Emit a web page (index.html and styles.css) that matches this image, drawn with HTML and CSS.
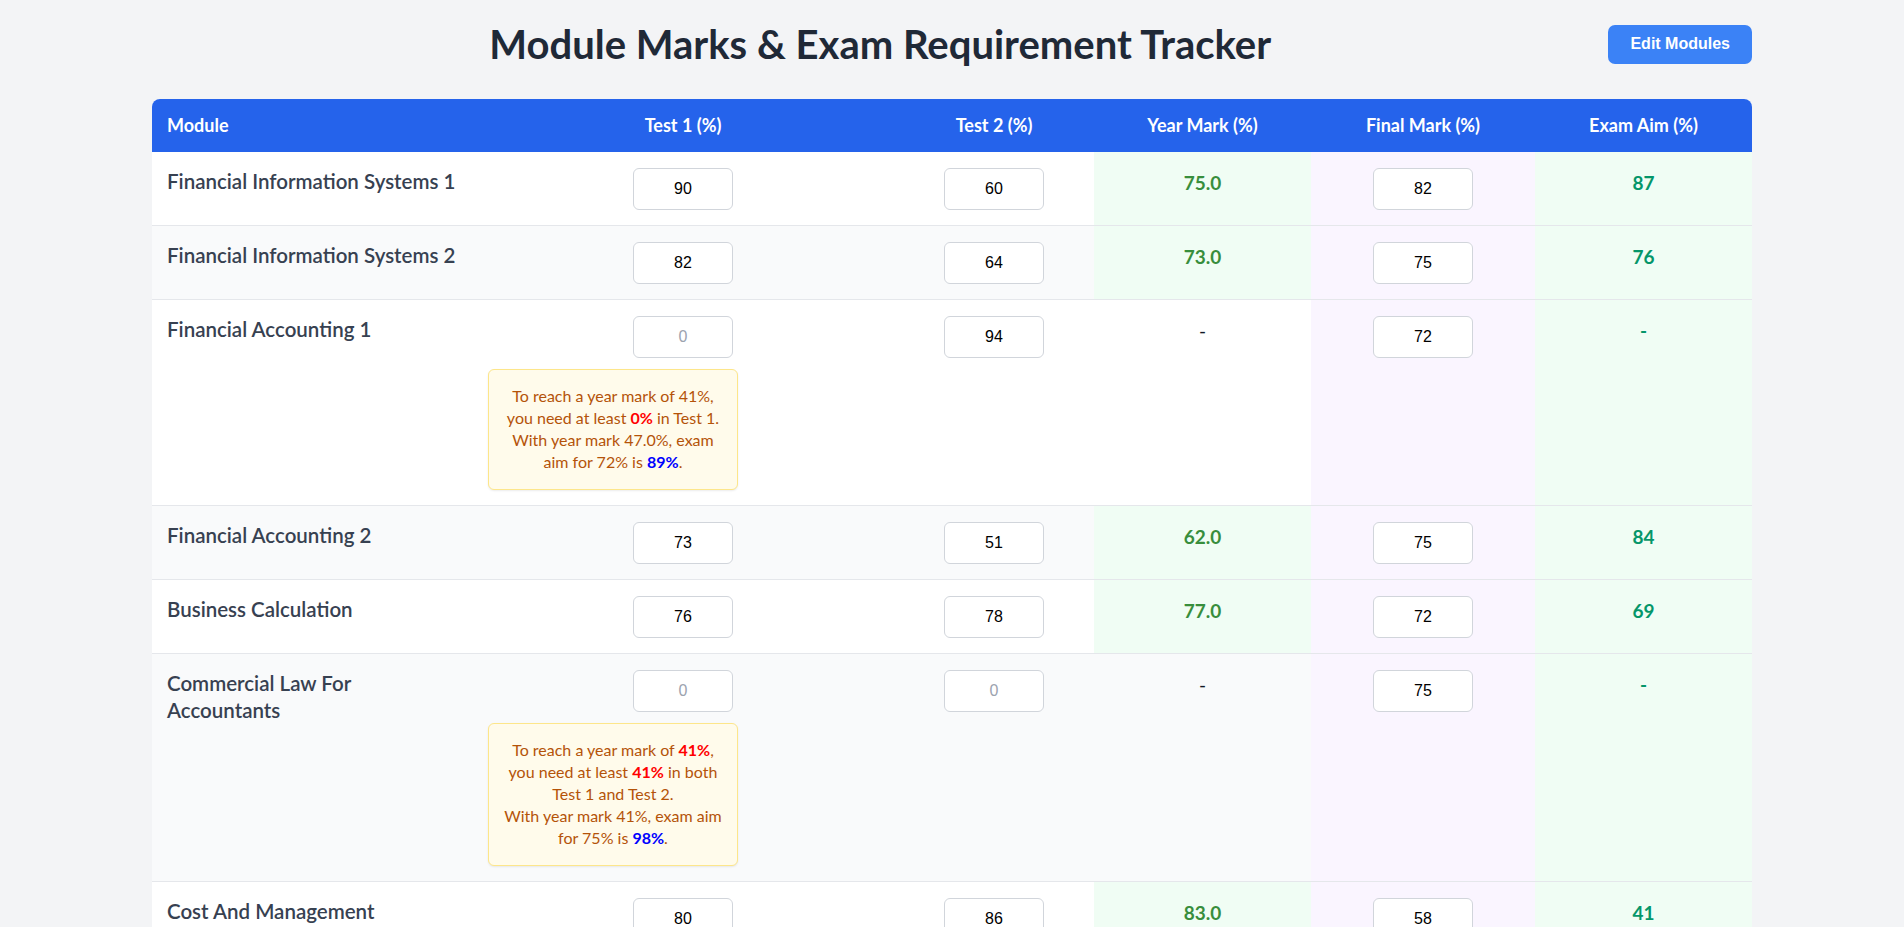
FILE: index.html
```html
<!DOCTYPE html>
<html>
<head>
	<title>Module Marks &amp; Exam Requirement Tracker</title>
	<meta name="viewport" content="width=device-width, initial-scale=1.0" />
	<link rel="stylesheet" href="styles.css">
</head>
<body>
	<div class="page">
		<header class="top">
			<h1 class="title">Module Marks &amp; Exam Requirement Tracker</h1>
			<button class="edit-btn">Edit Modules</button>
		</header>

		<div class="table-wrap">
			<table class="marks">
				<colgroup>
					<col class="w-module">
					<col class="w-test1">
					<col class="w-test2">
					<col class="w-year">
					<col class="w-final">
					<col class="w-aim">
				</colgroup>
				<thead>
					<tr>
						<th class="th-module">Module</th>
						<th>Test 1 (%)</th>
						<th>Test 2 (%)</th>
						<th>Year Mark (%)</th>
						<th>Final Mark (%)</th>
						<th>Exam Aim (%)</th>
					</tr>
				</thead>
				<tbody>
					<tr>
						<td class="module">Financial Information Systems 1</td>
						<td class="mark"><input class="mark-input" type="text" value="90" placeholder="0"></td>
						<td class="mark"><input class="mark-input" type="text" value="60" placeholder="0"></td>
						<td class="year filled">75.0</td>
						<td class="final"><input class="mark-input" type="text" value="82"></td>
						<td class="aim">87</td>
					</tr>
					<tr>
						<td class="module">Financial Information Systems 2</td>
						<td class="mark"><input class="mark-input" type="text" value="82" placeholder="0"></td>
						<td class="mark"><input class="mark-input" type="text" value="64" placeholder="0"></td>
						<td class="year filled">73.0</td>
						<td class="final"><input class="mark-input" type="text" value="75"></td>
						<td class="aim">76</td>
					</tr>
					<tr>
						<td class="module">Financial Accounting 1</td>
						<td class="mark">
							<input class="mark-input" type="text" value="" placeholder="0">
							<div class="hint">
								To reach a year mark of 41%, you need at least <b class="need">0%</b> in Test 1.<br>
								With year mark 47.0%, exam aim for 72% is <b class="goal">89%</b>.
							</div>
						</td>
						<td class="mark"><input class="mark-input" type="text" value="94" placeholder="0"></td>
						<td class="year">-</td>
						<td class="final"><input class="mark-input" type="text" value="72"></td>
						<td class="aim">-</td>
					</tr>
					<tr>
						<td class="module">Financial Accounting 2</td>
						<td class="mark"><input class="mark-input" type="text" value="73" placeholder="0"></td>
						<td class="mark"><input class="mark-input" type="text" value="51" placeholder="0"></td>
						<td class="year filled">62.0</td>
						<td class="final"><input class="mark-input" type="text" value="75"></td>
						<td class="aim">84</td>
					</tr>
					<tr>
						<td class="module">Business Calculation</td>
						<td class="mark"><input class="mark-input" type="text" value="76" placeholder="0"></td>
						<td class="mark"><input class="mark-input" type="text" value="78" placeholder="0"></td>
						<td class="year filled">77.0</td>
						<td class="final"><input class="mark-input" type="text" value="72"></td>
						<td class="aim">69</td>
					</tr>
					<tr>
						<td class="module">Commercial Law For Accountants</td>
						<td class="mark">
							<input class="mark-input" type="text" value="" placeholder="0">
							<div class="hint">
								To reach a year mark of <b class="need">41%</b>, you need at least <b class="need">41%</b> in both Test 1 and Test 2.<br>
								With year mark 41%, exam aim for 75% is <b class="goal">98%</b>.
							</div>
						</td>
						<td class="mark"><input class="mark-input" type="text" value="" placeholder="0"></td>
						<td class="year">-</td>
						<td class="final"><input class="mark-input" type="text" value="75"></td>
						<td class="aim">-</td>
					</tr>
					<tr>
						<td class="module">Cost And Management Accounting</td>
						<td class="mark"><input class="mark-input" type="text" value="80" placeholder="0"></td>
						<td class="mark"><input class="mark-input" type="text" value="86" placeholder="0"></td>
						<td class="year filled">83.0</td>
						<td class="final"><input class="mark-input" type="text" value="58"></td>
						<td class="aim">41</td>
					</tr>
				</tbody>
			</table>
		</div>
	</div>
</body>
</html>
```

FILE: styles.css
```css
html, body {
	margin: 0;
	background: #f3f4f6;
	font-family: "Lato", "Noto Sans", sans-serif;
	color: #1f2937;
}
.page {
	max-width: 1600px;
	margin: 0 auto;
	padding: 20px 0 40px 0;
}
.top {
	display: flex;
	align-items: center;
	margin-bottom: 31px;
}
.title {
	flex: 1;
	margin: 0;
	text-align: center;
	font-size: 40px;
	line-height: 48px;
	font-weight: 700;
	color: #1f2937;
}
.edit-btn {
	background-color: #3b82f6;
	color: white;
	border: none;
	border-radius: 7px;
	font-family: "Liberation Sans", Arial, sans-serif;
	font-weight: bold;
	font-size: 16px;
	padding: 10px 22px;
	height: 39px;
}
.table-wrap {
	background: white;
	border-radius: 8px 8px 0 0;
	overflow: hidden;
}
.marks {
	width: 100%;
	border-collapse: collapse;
	table-layout: fixed;
}
.w-module { width: 320px; }
.w-test1 { width: 422px; }
.w-test2 { width: 200px; }
.w-year { width: 217px; }
.w-final { width: 224px; }
.w-aim { width: 217px; }
.marks th {
	background: #2563eb;
	color: white;
	font-size: 18px;
	font-weight: 700;
	line-height: 21px;
	padding: 16px;
	text-align: center;
}
.marks th.th-module {
	text-align: left;
	padding-left: 15px;
}
.marks td {
	padding: 16px 16px 15px 16px;
	vertical-align: top;
	text-align: center;
	border-top: 1px solid #e5e7eb;
}
.marks tbody tr:first-child td {
	border-top: none;
}
.marks tbody tr:nth-child(even) {
	background: #f9fafb;
}
.marks td.module {
	text-align: left;
	padding-left: 15px;
	font-size: 20.5px;
	font-weight: 600;
	line-height: 27px;
	color: #374151;
}
.mark-input {
	display: block;
	margin: 0 auto;
	box-sizing: border-box;
	width: 100px;
	height: 42px;
	border: 1px solid #d1d5db;
	border-radius: 6px;
	background: white;
	font-family: "Liberation Sans", Arial, sans-serif;
	font-size: 16px;
	color: black;
	text-align: center;
	padding: 0 8px;
}
.mark-input::placeholder {
	color: #9ca3af;
}
.year, .aim {
	font-size: 19px;
	font-weight: 700;
	line-height: 30px;
}
.year {
	color: #111827;
	font-weight: 400;
}
.year.filled {
	background: #f0fdf4;
	color: #388e3c;
	font-weight: 700;
}
.final {
	background: #faf5ff;
}
.aim {
	background: #f0fdf4;
	color: #059669;
}
.hint {
	width: 250px;
	box-sizing: border-box;
	margin-top: 11px;
	padding: 15px 11px 16px 11px;
	background: #fffbeb;
	border: 1px solid #fde68a;
	border-radius: 6px;
	box-shadow: 0 1px 2px rgba(0, 0, 0, 0.08);
	color: #b45309;
	font-size: 16px;
	line-height: 22px;
	text-align: center;
}
.need {
	color: red;
}
.goal {
	color: blue;
}
```
